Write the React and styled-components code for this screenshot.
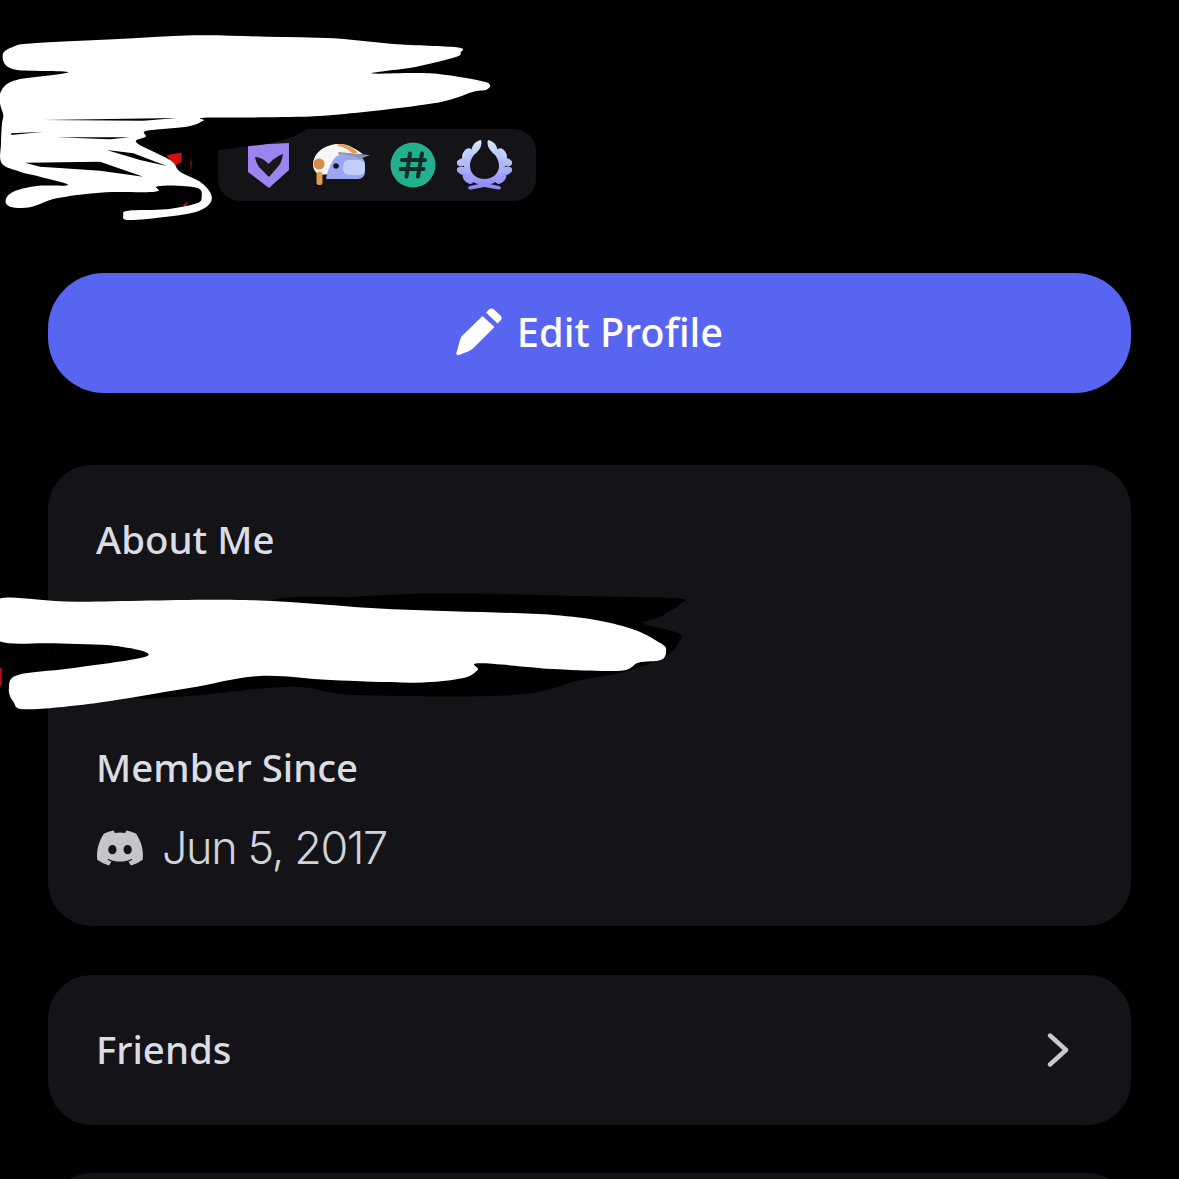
import React from "react";
import styled, { createGlobalStyle } from "styled-components";
import { FaDiscord } from "react-icons/fa";

const Global = createGlobalStyle`
  html, body { margin: 0; padding: 0; background: #000; }
  body { width: 1179px; height: 1179px; overflow: hidden; }
  * { box-sizing: border-box; }
`;

const Page = styled.div`
  position: relative;
  width: 1179px;
  height: 1179px;
  overflow: hidden;
  background: #000;
  padding: 0 48px;
  font-family: "Noto Sans", "Open Sans", sans-serif;
`;

const Header = styled.header`
  height: 273px;
  padding: 129px 0 0 170px;
`;

const BadgeTray = styled.div`
  width: 318px;
  height: 72px;
  border-radius: 22px;
  background: #131318;
  display: flex;
  align-items: center;
  padding-left: 30px;
`;

const BadgeSlot = styled.svg`
  flex: none;
  display: block;
  margin-left: ${(p) => p.$gap || 0}px;
`;

const EditButton = styled.button`
  width: 100%;
  height: 120px;
  border: 0;
  border-radius: 56px;
  background: #5865f0;
  color: #fff;
  display: flex;
  align-items: center;
  justify-content: center;
  gap: 15px;
  font-family: inherit;
  font-size: 39.8px;
  font-weight: 500;
  padding: 0 0 3px;
`;

const Card = styled.section`
  background: #131318;
  border-radius: 44px;
  margin-top: ${(p) => p.$top}px;
`;

const ProfileCard = styled(Card)`
  height: 461px;
  padding: 50px 48px 0;
`;

const Title = styled.h3`
  margin: 0;
  padding-bottom: 2px;
  font-size: 38.4px;
  line-height: 48px;
  font-weight: 500;
  color: #dcdde2;
`;

const Bio = styled.div`
  height: 178px;
`;

const DateRow = styled.div`
  display: flex;
  align-items: center;
  gap: 17px;
  margin-top: 30px;
  color: #d2d3d8;
  font-family: Inter, sans-serif;
  font-weight: 300;
  font-size: 45px;
  letter-spacing: -1.4px;
  line-height: 50px;
  svg { color: #c4c5cb; margin-left: -1px; }
`;

const LinkCard = styled(Card)`
  height: 150px;
  padding: 0 62px 0 48px;
  display: flex;
  align-items: center;
  justify-content: space-between;
`;

const NextCard = styled(Card)`
  height: 150px;
`;

const Scribble = styled.svg`
  position: absolute;
  left: ${(p) => p.$x}px;
  top: ${(p) => p.$y}px;
  pointer-events: none;
`;

/* closed Catmull-Rom curve through the hand-traced points of a marker stroke */
const blob = (pts) => {
  const n = pts.length;
  let d = `M${pts[0][0]} ${pts[0][1]}`;
  for (let i = 0; i < n; i++) {
    const [p0, p1, p2, p3] = [pts[(i - 1 + n) % n], pts[i], pts[(i + 1) % n], pts[(i + 2) % n]];
    const c1 = [p1[0] + (p2[0] - p0[0]) / 6, p1[1] + (p2[1] - p0[1]) / 6];
    const c2 = [p2[0] - (p3[0] - p1[0]) / 6, p2[1] - (p3[1] - p1[1]) / 6];
    d += `C${c1[0]} ${c1[1]} ${c2[0]} ${c2[1]} ${p2[0]} ${p2[1]}`;
  }
  return d + "Z";
};

const topStroke = [
  [8, 105], [40, 80], [100, 70], [340, 58], [580, 46], [800, 50], [1000, 55], [1180, 72], [1370, 82],
  [1382, 97], [1365, 112], [1250, 140], [1115, 160], [1290, 160], [1440, 182], [1470, 195], [1458, 210],
  [1420, 215], [1300, 250], [1000, 285], [800, 292], [612, 293], [610, 302], [560, 320], [440, 332],
  [437, 350], [410, 368], [510, 420], [540, 455], [600, 485], [632, 520], [630, 550], [590, 575],
  [500, 590], [385, 600], [370, 585], [385, 572], [500, 568], [590, 550], [605, 530], [595, 505],
  [530, 497], [470, 500], [465, 515], [300, 518], [170, 535], [90, 562], [30, 560], [17, 540], [40, 515],
  [110, 498], [205, 495], [120, 470], [60, 455], [5, 430], [3, 370], [6, 310], [10, 285], [0, 250],
  [5, 210], [50, 180], [205, 157], [40, 148],
];

const bioWhite = [
  [-10, 60], [170, 65], [550, 60], [880, 88], [1240, 105], [1400, 140], [1480, 190], [1492, 215], [1480, 240],
  [1430, 248], [1390, 272], [1250, 268], [1075, 250], [1070, 270], [1035, 295], [930, 308], [740, 300], [580, 288],
  [420, 325], [220, 368], [60, 388], [30, 365], [20, 325], [40, 285], [160, 265], [330, 228], [260, 198],
  [120, 190], [-10, 178],
];

const bioShadow = [
  [600, 65], [800, 50], [1000, 40], [1300, 48], [1515, 55], [1525, 70], [1480, 110], [1440, 130], [1520, 160],
  [1520, 190], [1490, 230], [1400, 275], [1300, 300], [1150, 345], [800, 345], [650, 320], [400, 350], [300, 340], [500, 200],
];

const Shield = () => (
  <BadgeSlot width="42" height="46" viewBox="0 0 42 46">
    <path d="M0 3 L41 1 V28 L21 46 L0 30Z" fill="#9b84ee" />
    <path d="M7 15 C12 15 17 18 20.5 22 C24 18 30 14 35 12 C34 20 31 24 28 27 L21 35 L14 28 C10 25 8 20 7 15Z" fill="#17171d" />
  </BadgeSlot>
);

const Helmet = () => (
  <BadgeSlot $gap={23} width="58" height="42" viewBox="0 0 58 42">
    <path d="M0 20 C1 8 12 0 27 0 C35 0 43 5 50 10 L28 14 L18 30 L6 31 C2 28 0 25 0 20Z" fill="#f8f6f4" />
    <path d="M25 0 C33 0 41 4 45 9 L39 9 C36 6 31 3 25 2Z" fill="#e89a4f" />
    <path d="M13 35 C14 28 18 19 21 15 C23 12 25 11 28 11 H40 C48 12 52 15 52 20 V28 C52 32 49 35 45 35Z" fill="#9aa6f0" />
    <path d="M25 8 L57 11 L47 15 C40 11 32 10 26 11Z" fill="#8b92b4" />
    <rect x="30" y="16" width="22" height="15" rx="6" fill="#c2cdf8" />
    <circle cx="23" cy="22" r="2.8" fill="#14142a" />
    <circle cx="6" cy="20" r="5.5" fill="#d98a4a" />
    <rect x="3.5" y="28" width="6" height="13" rx="2.5" fill="#e89a4f" />
  </BadgeSlot>
);

const HashBadge = () => (
  <BadgeSlot $gap={19} width="46" height="46" viewBox="0 0 46 46">
    <circle cx="23" cy="23" r="22.5" fill="#23b08f" />
    <path d="M20 11.5 L16.5 34.5 M32 11.5 L28 34.5 M12 18 H35 M10.5 27 H33.5" stroke="#102a28" strokeWidth="4" strokeLinecap="round" fill="none" />
  </BadgeSlot>
);

const laurelLeaves = [
  [10, 14, 6.5, 4, -55],
  [6, 22, 6.5, 4, -15],
  [6, 31, 6.5, 4, 20],
  [11, 38.5, 6.5, 4, 45],
];

const Laurel = () => (
  <BadgeSlot $gap={21} width="55" height="50" viewBox="0 0 55 50">
    <defs>
      <linearGradient id="laurelFill" gradientUnits="userSpaceOnUse" x1="0" y1="0" x2="0" y2="50">
        <stop offset="0" stopColor="#d2ecfb" />
        <stop offset="1" stopColor="#8b84f5" />
      </linearGradient>
    </defs>
    <g fill="url(#laurelFill)">
      <path d="M27.5 39 C36 39 42 33 42 26 C42 20 39 15 35 12 L40 9 C45 13 48 19 48 26 C48 37 39 45 27.5 45 C16 45 7 37 7 26 C7 19 10 13 15 9 L20 12 C16 15 13 20 13 26 C13 33 19 39 27.5 39Z" />
      <path d="M24 0 C26 5 22 12 16 15 C12 9 17 1 24 0Z" />
      <path d="M31 0 C29 5 33 12 39 15 C43 9 38 1 31 0Z" />
      {laurelLeaves.map(([x, y, rx, ry, a]) => (
        <React.Fragment key={y}>
          <ellipse cx={x} cy={y} rx={rx} ry={ry} transform={`rotate(${a} ${x} ${y})`} />
          <ellipse cx={55 - x} cy={y} rx={rx} ry={ry} transform={`rotate(${-a} ${55 - x} ${y})`} />
        </React.Fragment>
      ))}
      <path d="M28 43 L42 46 C45 47 44 50 41 49.5 L27.5 47 L14 49.5 C11 50 10 47 13 46 L27 43Z" />
    </g>
  </BadgeSlot>
);

const Pencil = () => (
  <svg width="46" height="48" viewBox="0 0 46 48" fill="#fff">
    <path d="M30 4.5 L33 1.5 C34.5 0 36.5 0 38 1.5 L44.5 7.5 C46 9 46 11 44.5 12.5 L41.5 15.5Z" />
    <path d="M26.5 8 L38.5 19 L18 39.5 C16 41.5 14 42.5 12 43.5 L3 47 C1 47.5 0 46.5 0.5 44.5 L4 32 C4.5 30 5.5 28.5 7 27Z" />
  </svg>
);

const Chevron = () => (
  <svg width="22" height="34" viewBox="0 0 22 34" fill="none">
    <path d="M3 2.5 L19 17 L3 31.5" stroke="#c9cad0" strokeWidth="4.4" strokeLinecap="round" strokeLinejoin="round" />
  </svg>
);

export default function App() {
  return (
    <Page>
      <Global />
      <Header>
        <BadgeTray>
          <Shield />
          <Helmet />
          <HashBadge />
          <Laurel />
        </BadgeTray>
      </Header>

      <EditButton>
        <Pencil />
        Edit Profile
      </EditButton>

      <ProfileCard $top={72}>
        <Title>About Me</Title>
        <Bio />
        <Title>Member Since</Title>
        <DateRow>
          <FaDiscord size={50} />
          Jun 5, 2017
        </DateRow>
      </ProfileCard>

      <LinkCard $top={49}>
        <Title>Friends</Title>
        <Chevron />
      </LinkCard>

      <NextCard $top={48} />

      <Scribble $x={0} $y={20} width="500" height="210" viewBox="0 0 1500 630">
        <path d="M640 322 H930 L880 350 L800 372 L660 390 L640 400Z" fill="#000" />
        <path d="M500 405 L545 398 L545 425 L520 440Z" fill="#d40d0d" />
        <path d="M572 410 L570 450 L576 430Z" fill="#8a0b0b" />
        <path d="M548 555 L565 545 L556 562Z" fill="#c81010" />
        <path d={blob(topStroke)} fill="#fff" />
        <path d="M130 300 L530 294 L430 302Z" fill="#000" />
        <path d="M34 340 L130 335 L34 345Z" fill="#000" />
        <path d="M170 352 L390 352 L330 358Z" fill="#000" />
        <path d="M320 390 L400 400 L500 438 L420 420Z" fill="#000" />
        <path d="M75 428 L300 425 L430 470 L300 452 L190 445 L120 440Z" fill="#000" />
      </Scribble>

      <Scribble $x={0} $y={580} width="700" height="140" viewBox="0 0 1568 420" preserveAspectRatio="none">
        <path d={blob(bioShadow)} fill="#000" />
        <path d="M108 175 H340 V235 L108 275Z" fill="#000" />
        <path d="M0 265 L4 265 L4 315 L0 320Z" fill="#b50d18" />
        <path d={blob(bioWhite)} fill="#fff" />
      </Scribble>
    </Page>
  );
}
